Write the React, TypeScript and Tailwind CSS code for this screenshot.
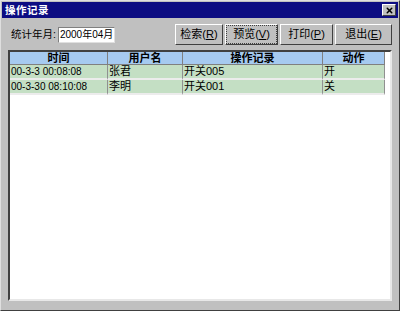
import { X } from 'lucide-react';

const rows = [
  { time: '00-3-3 00:08:08', user: '张君', op: '开关005', act: '开' },
  { time: '00-3-30 08:10:08', user: '李明', op: '开关001', act: '关' },
];

const buttons = [
  { label: '检索', key: 'R' },
  { label: '预览', key: 'V', focused: true },
  { label: '打印', key: 'P' },
  { label: '退出', key: 'E' },
];

const font = { fontFamily: '"Liberation Sans", "Noto Sans CJK SC", sans-serif' };

const App = () => {
  return (
    <div
      className="w-[400px] h-[311px] bg-[#c0c0c0] border border-t-[#dfdfdf] border-l-[#dfdfdf] border-r-[#404040] border-b-[#404040] flex flex-col text-black overflow-hidden whitespace-nowrap"
      style={font}
    >
      {/* Title bar */}
      <div className="mx-[1px] mt-[1px] h-[16px] bg-[#0c0c82] flex items-center justify-between pl-[3px] pr-[2px]">
        <span className="text-[10.5px] leading-none text-white font-bold tracking-[0.5px]">操作记录</span>
        <div className="w-[14px] h-[12px] bg-[#c0c0c0] border border-t-white border-l-white border-r-[#404040] border-b-[#404040] flex items-center justify-center">
          <X className="w-[9px] h-[9px]" strokeWidth={4} />
        </div>
      </div>

      {/* Toolbar */}
      <div className="flex items-center h-[21px] mt-[6px] pl-[10px] pr-[7px]">
        <span className="text-[10.5px] leading-none">统计年月:</span>
        <div className="ml-[2px] w-[57px] h-[16px] bg-white border border-t-[#808080] border-l-[#808080] border-r-[#e0e0e0] border-b-[#e0e0e0] flex items-center pl-[1px] text-[10px] leading-none">
          2000年04月
        </div>
        <div className="ml-auto flex gap-[2px]">
          {buttons.map((b) => (
            <div
              key={b.label}
              className={`h-[21px] flex items-center justify-center text-[11px] leading-none border border-t-white border-l-white border-r-[#404040] border-b-[#404040] ${
                b.label === '退出' ? 'w-[57px]' : b.label === '检索' ? 'w-[48px]' : 'w-[53px]'
              }`}
            >
              <span className={b.focused ? 'px-[6px] py-[3px] border border-dotted border-[#404040]' : ''}>
                {b.label}(<span className="underline">{b.key}</span>)
              </span>
            </div>
          ))}
        </div>
      </div>

      {/* Grid panel */}
      <div className="flex-1 mt-[5px] mx-[7px] mb-[9px] bg-white border-2 border-t-[#404040] border-l-[#404040] border-r-[#e8e8e8] border-b-[#e8e8e8] overflow-hidden">
        <div className="grid grid-cols-[98px_75px_140px_62px] text-[11px] leading-none">
          {['时间', '用户名', '操作记录', '动作'].map((h) => (
            <div
              key={h}
              className="h-[13px] bg-[#a6caf0] border-r border-b border-[#808080] flex items-center justify-center font-bold"
            >
              {h}
            </div>
          ))}
          {rows.map((r) =>
            [r.time, r.user, r.op, r.act].map((c, i) => (
              <div
                key={r.time + i}
                className={`h-[15px] bg-[#c4dfc4] border-r border-b-2 border-r-[#909090] border-b-[#ececec] flex items-center pl-[1px] overflow-hidden ${
                  i === 0 ? 'text-[10px]' : ''
                }`}
              >
                {c}
              </div>
            ))
          )}
        </div>
      </div>
    </div>
  );
};

export default App;
